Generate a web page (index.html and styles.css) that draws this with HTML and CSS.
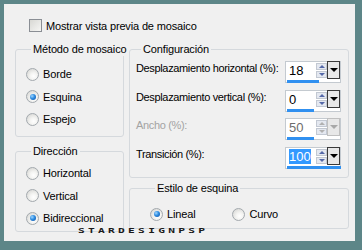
FILE: index.html
```html
<!DOCTYPE html>
<html>
<head>
<meta charset="utf-8">
<link rel="stylesheet" href="styles.css">
</head>
<body>
<div class="panel">
  <div class="check-row"><span class="checkbox"></span><span>Mostrar vista previa de mosaico</span></div>
  <div class="columns">
    <div class="col-left">
      <fieldset class="group metodo">
        <legend>Método de mosaico</legend>
        <div class="radio-row"><span class="radio"></span>Borde</div>
        <div class="radio-row"><span class="radio on"></span>Esquina</div>
        <div class="radio-row"><span class="radio"></span>Espejo</div>
      </fieldset>
      <fieldset class="group direccion">
        <legend>Dirección</legend>
        <div class="radio-row"><span class="radio"></span>Horizontal</div>
        <div class="radio-row"><span class="radio"></span>Vertical</div>
        <div class="radio-row"><span class="radio on"></span>Bidireccional</div>
      </fieldset>
    </div>
    <div class="col-right">
      <fieldset class="group config">
        <legend>Configuración</legend>
        <div class="field-row">
          <span class="flabel">Desplazamiento horizontal (%):</span>
          <div class="spin">
            <div class="spin-top"><span class="val">18</span><span class="arrows"><i class="up"></i><i class="dn"></i></span><span class="drop"><i></i></span></div>
            <div class="bar"><b style="width:32px"></b></div>
          </div>
        </div>
        <div class="field-row">
          <span class="flabel">Desplazamiento vertical (%):</span>
          <div class="spin">
            <div class="spin-top"><span class="val">0</span><span class="arrows"><i class="up"></i><i class="dn"></i></span><span class="drop"><i></i></span></div>
            <div class="bar"><b style="width:27px"></b></div>
          </div>
        </div>
        <div class="field-row disabled">
          <span class="flabel">Ancho (%):</span>
          <div class="spin">
            <div class="spin-top"><span class="val">50</span><span class="arrows"><i class="up"></i><i class="dn"></i></span><span class="drop"><i></i></span></div>
            <div class="bar"><b style="width:27px"></b></div>
          </div>
        </div>
        <div class="field-row">
          <span class="flabel">Transición (%):</span>
          <div class="spin">
            <div class="spin-top"><span class="val"><em>100</em></span><span class="arrows"><i class="up"></i><i class="dn"></i></span><span class="drop"><i></i></span></div>
            <div class="bar"><b style="width:54px"></b></div>
          </div>
        </div>
      </fieldset>
      <fieldset class="group estilo">
        <legend>Estilo de esquina</legend>
        <div class="inline-radios">
          <div class="radio-row"><span class="radio on"></span>Lineal</div>
          <div class="radio-row"><span class="radio"></span>Curvo</div>
        </div>
      </fieldset>
    </div>
  </div>
  <div class="watermark">STARDESIGNPSP</div>
</div>
</body>
</html>
```

FILE: styles.css
```css
html, body {
  margin: 0;
  padding: 0;
}
body {
  background: #5d8688;
  width: 362px;
  height: 250px;
  font-family: "Liberation Sans", Arial, sans-serif;
  font-size: 11px;
  letter-spacing: -0.15px;
  color: #000;
  white-space: nowrap;
}
.panel {
  position: relative;
  margin: 4px 0 0 4px;
  width: 351px;
  height: 237px;
  background: #f0f0f0;
  box-sizing: border-box;
  padding: 15px 0 0 11px;
}
.check-row {
  display: flex;
  align-items: center;
  gap: 4px;
  margin-left: 14px;
  height: 13px;
}
.checkbox {
  width: 11px;
  height: 11px;
  border: 1px solid #8a8e94;
  background: linear-gradient(135deg, #d8d8d4, #f6f6f4);
}
.columns {
  display: flex;
  gap: 5px;
  margin-top: 11px;
}
.col-left, .col-right {
  display: flex;
  flex-direction: column;
}
.col-left { width: 109px; gap: 8px; }
.col-right { width: 220px; gap: 4px; }
.group {
  margin: 0;
  border: 1px solid #d5d9dd;
  border-radius: 3px;
  box-sizing: border-box;
  min-width: 0;
}
.group legend {
  padding: 0 2px;
  margin-left: 5px;
  line-height: 13px;
  white-space: nowrap;
}
.metodo { height: 94px; padding: 7px 0 0 10px; }
.direccion { height: 87px; padding: 4px 0 0 10px; }
.config { height: 135px; padding: 5px 0 0 6px; }
.estilo { height: 47px; padding: 8px 0 0 20px; }
.radio-row {
  display: flex;
  align-items: center;
  gap: 4px;
  height: 22.5px;
}
.radio {
  width: 11px;
  height: 11px;
  border-radius: 50%;
  border: 1px solid #a3a9ae;
  background: radial-gradient(circle at 60% 65%, #ffffff 0%, #f4f4f2 35%, #cfcfcc 100%);
  position: relative;
}
.radio.on::after {
  content: "";
  position: absolute;
  left: 2.5px;
  top: 2.5px;
  width: 6px;
  height: 6px;
  border-radius: 50%;
  background: radial-gradient(circle at 35% 35%, #9fd6ff 0%, #2d8be0 45%, #0a4a9e 100%);
}
.inline-radios {
  display: flex;
  gap: 37px;
}
.field-row {
  display: flex;
  justify-content: space-between;
  align-items: flex-start;
  height: 28.5px;
  padding-right: 7px;
}
.flabel {
  margin-top: 1px;
  letter-spacing: -0.35px;
}
.disabled .flabel { color: #a3a3a3; }
.spin {
  width: 56px;
  height: 22px;
  border: 1px solid #c4cad0;
  background: #fff;
  box-sizing: border-box;
  display: flex;
  flex-direction: column;
}
.spin-top {
  display: flex;
  height: 17px;
}
.val {
  width: 31px;
  padding-left: 3px;
  box-sizing: border-box;
  font-size: 13px;
  letter-spacing: 0;
  line-height: 17px;
}
.val em {
  font-style: normal;
  background: #3399ff;
  color: #fff;
}
.disabled .val { color: #6d6d6d; }
.arrows {
  width: 11px;
  display: flex;
  flex-direction: column;
  gap: 1px;
  padding-top: 1px;
}
.arrows i {
  display: block;
  height: 7px;
  background: #e4e8f0;
  border: 1px solid #c2c8d2;
  box-sizing: border-box;
  position: relative;
}
.arrows i::after {
  content: "";
  position: absolute;
  left: 2px;
  border-left: 3px solid transparent;
  border-right: 3px solid transparent;
}
.arrows .up::after { top: 1px; border-bottom: 3px solid #5468a8; }
.arrows .dn::after { top: 1px; border-top: 3px solid #5468a8; }
.drop {
  width: 13px;
  border: 1px solid #3a3a3a;
  background: #e8e8e8;
  box-sizing: border-box;
  margin-top: -1px;
  height: 18px;
  position: relative;
}
.drop i {
  position: absolute;
  left: 2px;
  top: 6px;
  border-left: 4px solid transparent;
  border-right: 4px solid transparent;
  border-top: 4px solid #000;
}
.disabled .drop { border-color: #c0c0c0; }
.disabled .drop i { border-top-color: #a8a8a8; }
.disabled .arrows .up::after { border-bottom-color: #b0b0b0; }
.disabled .arrows .dn::after { border-top-color: #b0b0b0; }
.bar {
  height: 3px;
  margin: 1px 0 0 1px;
}
.bar b {
  display: block;
  height: 3px;
  background: #3090f0;
}
.watermark {
  position: absolute;
  left: 74px;
  top: 224px;
  font-family: "DejaVu Sans Mono", monospace;
  font-size: 8px;
  font-weight: bold;
  letter-spacing: 2.34px;
  line-height: 8px;
  color: #1a1a1a;
  transform: scale(1.4, 0.85);
  transform-origin: 0 0;
}
```
